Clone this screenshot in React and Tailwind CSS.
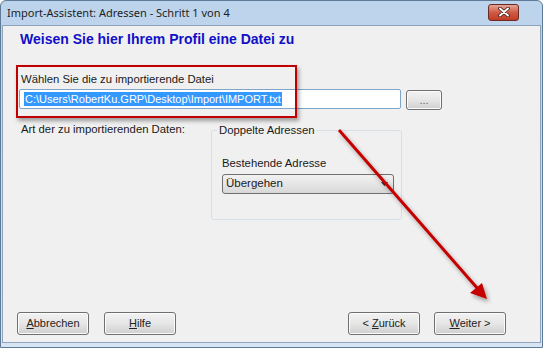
import React from "react";

const Btn = ({ children, className = "w-[72px] h-[23px]" }) => (
  <button
    className={`rounded-[3px] border border-[#707070] bg-gradient-to-b from-[#f2f2f2] via-[#e6e6e6] to-[#cfcfcf] text-[11px] text-[#222] shadow-[inset_0_0_0_1px_#fbfbfb] ${className}`}
  >
    {children}
  </button>
);

export default function App() {
  return (
    <div
      className="relative w-[543px] h-[348px] bg-gradient-to-b from-[#bcd3ec] to-[#d6e4f3] border border-[#5f7a96] rounded-t-[6px] flex flex-col overflow-hidden"
      style={{ fontFamily: '"Liberation Sans", Arial, sans-serif' }}
    >
      {/* title bar */}
      <div className="h-[24px] flex items-center justify-between pl-[6px] pr-[23px] shrink-0">
        <span className="text-[11px] text-[#1e1e1e]" style={{ fontFamily: '"Noto Sans", sans-serif' }}>
          Import-Assistent: Adressen - Schritt 1 von 4
        </span>
        <div className="mt-[-2px] w-[31px] h-[17px] rounded-[3px] border border-[#6b2b22] bg-gradient-to-b from-[#e4a496] via-[#cf5b46] to-[#c33a24] flex items-center justify-center">
          <svg width="12" height="10" viewBox="0 0 12 10">
            <path d="M2 1.5 L10 8.5 M10 1.5 L2 8.5" stroke="#3b1a12" strokeWidth="3.6" strokeLinecap="round" />
            <path d="M2 1.5 L10 8.5 M10 1.5 L2 8.5" stroke="#fff" strokeWidth="2" strokeLinecap="round" />
          </svg>
        </div>
      </div>

      {/* client area */}
      <div className="flex-1 mx-[1px] mb-[4px] border border-[#8ea4bd] bg-[#f0f0f0] flex flex-col text-[11px] text-[#1a1a1a]">
        <h1 className="pl-[17px] pt-[4px] text-[14px] font-bold text-[#1010c8] leading-[18px]">
          Weisen Sie hier Ihrem Profil eine Datei zu
        </h1>

        <div className="flex items-start mt-[24px] pl-[16px]">
          <div className="flex flex-col">
            <span className="pl-[2px] leading-[14px] text-[11.3px]">Wählen Sie die zu importierende Datei</span>
            <div className="mt-[3px] w-[382px] h-[20px] border border-[#7fa6c9] rounded-[2px] bg-white flex items-center pl-[4px]">
              <span className="bg-[#3399ff] text-white text-[11px] leading-[14px] px-[1px]">
                C:\Users\RobertKu.GRP\Desktop\Import\IMPORT.txt
              </span>
            </div>
          </div>
          <Btn className="ml-[5px] mt-[18px] w-[36px] h-[20px] !text-[#666]">...</Btn>
        </div>

        <div className="flex mt-[12px] pl-[18px]">
          <span className="w-[190px] leading-[14px] text-[11.3px]">Art der zu importierenden Daten:</span>
          <div className="relative mt-[8px] w-[191px] h-[90px] border border-[#d5dfe5] rounded-[3px] pl-[10px] pt-[25px]">
            <span className="absolute -top-[8px] left-[5px] px-[2px] bg-[#f0f0f0] leading-[14px] text-[11.3px]">Doppelte Adressen</span>
            <div className="leading-[14px] text-[11.3px]">Bestehende Adresse</div>
            <div className="mt-[4px] w-[172px] h-[20px] border border-[#707070] rounded-[3px] bg-gradient-to-b from-[#f2f2f2] to-[#d8d8d8] flex items-center justify-between pl-[3px] pr-[5px]">
              <span className="text-[11.5px]">Übergehen</span>
              <svg width="7" height="4" viewBox="0 0 7 4">
                <path d="M0 0 H7 L3.5 4 Z" fill="#222" />
              </svg>
            </div>
          </div>
        </div>

        <div className="flex-1" />

        <div className="flex items-center pl-[14px] pr-[34px] pb-[7px]">
          <Btn><u>A</u>bbrechen</Btn>
          <Btn className="w-[72px] h-[23px] ml-[15px]"><u>H</u>ilfe</Btn>
          <div className="flex-1" />
          <Btn>&lt; <u>Z</u>urück</Btn>
          <Btn className="w-[72px] h-[23px] ml-[14px]"><u>W</u>eiter &gt;</Btn>
        </div>
      </div>

      {/* red highlight box */}
      <div className="absolute left-[15px] top-[64px] w-[281px] h-[53px] border-2 border-[#c00000] shadow-[2px_3px_4px_rgba(0,0,0,0.35)] pointer-events-none" />

      {/* red arrow */}
      <svg className="absolute left-0 top-0 pointer-events-none" width="543" height="348">
        <defs>
          <filter id="sh" x="-20%" y="-20%" width="140%" height="140%">
            <feDropShadow dx="2" dy="3" stdDeviation="2" floodColor="#000" floodOpacity="0.35" />
          </filter>
        </defs>
        <g filter="url(#sh)">
          <line x1="338" y1="129" x2="477" y2="288" stroke="#c40000" strokeWidth="3" />
          <path d="M486 298 L469 292 L481 282 Z" fill="#c40000" />
        </g>
      </svg>
    </div>
  );
}
